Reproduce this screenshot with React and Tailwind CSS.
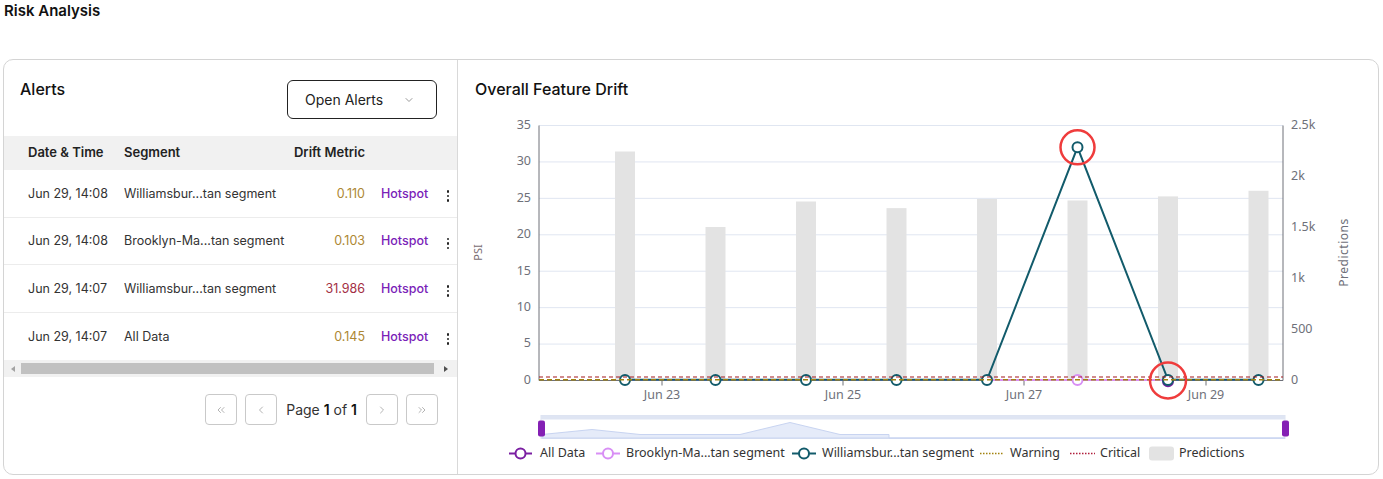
import React from 'react';
import { ChevronDown, ChevronLeft, ChevronRight, ChevronsLeft, ChevronsRight } from 'lucide-react';

const alerts = [
  { time: 'Jun 29, 14:08', segment: 'Williamsbur...tan segment', metric: '0.110', tone: 'text-[#ad8733]' },
  { time: 'Jun 29, 14:08', segment: 'Brooklyn-Ma...tan segment', metric: '0.103', tone: 'text-[#ad8733]' },
  { time: 'Jun 29, 14:07', segment: 'Williamsbur...tan segment', metric: '31.986', tone: 'text-[#a32f45]' },
  { time: 'Jun 29, 14:07', segment: 'All Data', metric: '0.145', tone: 'text-[#ad8733]' },
];

// chart geometry, page coordinates (svg viewBox is offset so these land in place)
const X0 = 539;
const X1 = 1283;
const Y0 = 379;
const psiY = (v) => Y0 - v * (255 / 35);
const predY = (p) => Y0 - p * (255 / 2500);
const xs = [625, 715.5, 806, 896.5, 987, 1077.5, 1168, 1258.5];
const predictions = [2245, 1505, 1755, 1690, 1780, 1765, 1805, 1860];
const williamsburg = [0.1, 0.1, 0.1, 0.1, 0.1, 32, 0.1, 0.1];

const Kebab = () => (
  <div className="flex flex-col items-center gap-[2px]">
    <span className="w-[2.5px] h-[2.5px] rounded-full bg-[#222]" />
    <span className="w-[2.5px] h-[2.5px] rounded-full bg-[#222]" />
    <span className="w-[2.5px] h-[2.5px] rounded-full bg-[#222]" />
  </div>
);

const PageButton = ({ children }) => (
  <button className="w-8 h-[31px] flex items-center justify-center rounded-[4px] border border-[#c9c9c9] bg-white text-[#b3b3b3]">
    {children}
  </button>
);

const Marker = ({ x, y, color }) => (
  <circle cx={x} cy={y} r="5" fill="#fff" stroke={color} strokeWidth="2" />
);

const DriftChart = () => {
  const grid = [0, 5, 10, 15, 20, 25, 30, 35];
  const right = [
    ['0', 0],
    ['500', 500],
    ['1k', 1000],
    ['1.5k', 1500],
    ['2k', 2000],
    ['2.5k', 2500],
  ];
  const ticks = [
    ['Jun 23', 662],
    ['Jun 25', 843],
    ['Jun 27', 1024],
    ['Jun 29', 1206],
  ];
  const teal = '#125b6b';
  const linePts = xs.map((x, i) => `${x},${psiY(williamsburg[i])}`).join(' ');

  return (
    <svg width="920" height="360" viewBox="458 106.5 920 360" style={{ fontFamily: '"Noto Sans", "DejaVu Sans", sans-serif' }}>
      {/* grid */}
      {grid.map((v) => (
        <line key={v} x1={X0} x2={X1} y1={psiY(v)} y2={psiY(v)} stroke="#e0e6f1" strokeWidth="1" />
      ))}

      {/* prediction bars */}
      {xs.map((x, i) => (
        <rect key={x} x={x - 10} y={predY(predictions[i])} width="20" height={Y0 - predY(predictions[i])} fill="#e3e3e3" />
      ))}

      {/* axes */}
      <line x1={X0} x2={X0} y1="124" y2={Y0} stroke="#6e7079" />
      <line x1={X1} x2={X1} y1="124" y2={Y0} stroke="#6e7079" />
      <line x1={X0} x2={X1} y1={Y0} y2={Y0} stroke="#6e7079" />
      {ticks.map(([t, x]) => (
        <line key={t} x1={x} x2={x} y1={Y0} y2={Y0 + 5} stroke="#6e7079" />
      ))}

      {grid.map((v) => (
        <text key={v} x="531" y={psiY(v)} textAnchor="end" dominantBaseline="middle" fontSize="12.5" fill="#6e7079">
          {v}
        </text>
      ))}
      {right.map(([label, v]) => (
        <text key={label} x="1291" y={predY(v)} dominantBaseline="middle" fontSize="12.5" fill="#6e7079">
          {label}
        </text>
      ))}
      {ticks.map(([t, x]) => (
        <text key={t} x={x} y="394" textAnchor="middle" dominantBaseline="middle" fontSize="12.5" fill="#6e7079">
          {t}
        </text>
      ))}
      <text x="479" y="251" transform="rotate(-90 479 251)" textAnchor="middle" dominantBaseline="middle" fontSize="11" fill="#7a6d73">
        PSI
      </text>
      <text x="1345" y="251" transform="rotate(-90 1345 251)" textAnchor="middle" dominantBaseline="middle" fontSize="12" fill="#6e7079" letterSpacing="0.5">
        Predictions
      </text>

      {/* series */}
      <line x1={xs[0]} x2={xs[7]} y1={Y0 - 0.5} y2={Y0 - 0.5} stroke="#7b1fa2" strokeWidth="2" />
      <line x1={xs[0]} x2={xs[7]} y1={Y0 - 0.5} y2={Y0 - 0.5} stroke="#d88ff5" strokeWidth="2" />
      <polyline points={linePts} fill="none" stroke={teal} strokeWidth="2" />
      <Marker x={xs[6]} y={Y0 + 0.8} color="#7b1fa2" />
      {xs.map((x, i) =>
        i === 5 ? null : <Marker key={x} x={x} y={Y0 - 0.5} color={teal} />
      )}
      <Marker x={xs[5]} y={Y0 - 0.5} color="#d88ff5" />
      <Marker x={xs[5]} y={psiY(32)} color={teal} />

      {/* thresholds */}
      <line x1={X0} x2={X1} y1="375.5" y2="375.5" stroke="#a3161c" strokeWidth="1.2" strokeDasharray="4 3" />
      <line x1={X0} x2={X1} y1="378.2" y2="378.2" stroke="#a2820f" strokeWidth="1.5" strokeDasharray="5 3" />

      {/* highlight rings */}
      <circle cx={xs[5]} cy={psiY(32)} r="17" fill="none" stroke="#ef3c3c" strokeWidth="2.5" />
      <circle cx={xs[6]} cy={Y0} r="18" fill="none" stroke="#ef3c3c" strokeWidth="2.5" />

      {/* data zoom */}
      <rect x="541" y="414" width="744" height="23" fill="#fff" stroke="#dde3f1" />
      <rect x="541" y="414" width="744" height="4" fill="#dfe5f3" />
      <polygon
        points="542,433 592,428 640,433 740,433 790,421 840,433 889,433 889,436.5 1285,436.5 542,436.5"
        fill="#e5ebf9"
        stroke="#c8d4f1"
        strokeWidth="1"
      />
      <rect x="538" y="419" width="7" height="16" rx="2" fill="#8420b4" />
      <rect x="1282" y="419" width="7" height="16" rx="2" fill="#8420b4" />

      {/* legend */}
      <g fontSize="12.5" fill="#333">
        <line x1="509" x2="532" y1="452" y2="452" stroke="#7b1fa2" strokeWidth="2" />
        <circle cx="520.5" cy="452" r="5" fill="#fff" stroke="#7b1fa2" strokeWidth="2" />
        <text x="540" y="452" dominantBaseline="middle">All Data</text>

        <line x1="596" x2="620" y1="452" y2="452" stroke="#d88ff5" strokeWidth="2" />
        <circle cx="608" cy="452" r="5" fill="#fff" stroke="#d88ff5" strokeWidth="2" />
        <text x="626" y="452" dominantBaseline="middle">Brooklyn-Ma...tan segment</text>

        <line x1="792" x2="816" y1="452" y2="452" stroke={teal} strokeWidth="2" />
        <circle cx="804" cy="452" r="5" fill="#fff" stroke={teal} strokeWidth="2" />
        <text x="822" y="452" dominantBaseline="middle">Williamsbur...tan segment</text>

        <line x1="980" x2="1004" y1="452" y2="452" stroke="#a2820f" strokeWidth="1.5" strokeDasharray="1.5 1.5" />
        <text x="1010" y="452" dominantBaseline="middle">Warning</text>

        <line x1="1070" x2="1095" y1="452" y2="452" stroke="#b01f3c" strokeWidth="1.5" strokeDasharray="1.5 1.5" />
        <text x="1100" y="452" dominantBaseline="middle">Critical</text>

        <rect x="1149" y="445" width="25" height="14" rx="3" fill="#e3e3e3" />
        <text x="1179" y="452" dominantBaseline="middle">Predictions</text>
      </g>
    </svg>
  );
};

export default function App() {
  return (
    <div className="w-[1383px] h-[479px] bg-white text-[#1a1a1a] overflow-hidden" style={{ fontFamily: 'Inter, "Liberation Sans", sans-serif' }}>
      <h1 className="pl-1 pt-px text-[15px] leading-5 font-semibold text-[#111]">Risk Analysis</h1>

      <div className="ml-[3px] mt-[38px] w-[1376px] h-[416px] flex rounded-[10px] border border-[#d4d4d4] overflow-hidden">
        {/* Alerts panel */}
        <div className="w-[454px] shrink-0 border-r border-[#d9d9d9] flex flex-col overflow-hidden">
          <div className="h-[76px] flex justify-between items-start pl-4 pr-5 pt-[17px]">
            <h2 className="text-[16px] leading-6 font-medium text-[#111]">Alerts</h2>
            <button className="mt-[3px] w-[150px] h-[39px] flex items-center justify-between pl-[17px] pr-[21px] rounded-[6px] border border-[#222] text-[14px] text-[#222]">
              <span>Open Alerts</span>
              <ChevronDown size={12} className="text-[#999]" />
            </button>
          </div>

          <div className="w-[453px] overflow-hidden">
            <div className="w-[480px]">
              <div className="h-[34px] flex items-center pl-6 bg-[#f1f1f1] text-[13px] font-semibold text-[#222]">
                <div className="w-[96px]">Date &amp; Time</div>
                <div className="w-[166px]">Segment</div>
                <div className="w-[75px] text-right">Drift Metric</div>
              </div>
              {alerts.map((a, i) => (
                <div
                  key={i}
                  className={`h-[47.5px] pt-[2px] flex items-center pl-6 text-[12.5px] text-[#333] ${i < alerts.length - 1 ? 'border-b border-[#ececec]' : ''}`}
                >
                  <div className="w-[96px]">{a.time}</div>
                  <div className="w-[166px] truncate">{a.segment}</div>
                  <div className={`w-[75px] text-right ${a.tone}`}>{a.metric}</div>
                  <div className="w-[60px] ml-4 font-medium text-[#7a22b8]">Hotspot</div>
                  <div className="w-[14px] flex justify-center pt-[3px]">
                    <Kebab />
                  </div>
                </div>
              ))}
            </div>
          </div>

          {/* horizontal scrollbar */}
          <div className="h-[17px] flex items-center bg-[#f1f1f1]">
            <div className="w-[17px] flex justify-center">
              <span className="w-0 h-0 border-y-[3.5px] border-y-transparent border-r-[4px] border-r-[#a3a3a3]" />
            </div>
            <div className="h-[11px] flex-1 bg-[#c1c1c1]" />
            <div className="w-[23px] flex justify-center">
              <span className="w-0 h-0 border-y-[3.5px] border-y-transparent border-l-[4px] border-l-[#505050]" />
            </div>
          </div>

          <div className="mt-[17px] pr-[19px] flex justify-end items-center gap-2">
            <PageButton>
              <ChevronsLeft size={12} strokeWidth={2} />
            </PageButton>
            <PageButton>
              <ChevronLeft size={12} strokeWidth={2} />
            </PageButton>
            <span className="text-[14px] text-[#333] px-px">
              Page <span className="font-semibold text-[#111]">1</span> of <span className="font-semibold text-[#111]">1</span>
            </span>
            <PageButton>
              <ChevronRight size={12} strokeWidth={2} />
            </PageButton>
            <PageButton>
              <ChevronsRight size={12} strokeWidth={2} />
            </PageButton>
          </div>
        </div>

        {/* Chart panel */}
        <div className="flex-1 flex flex-col">
          <div className="h-[48px] pl-[17px] pt-[17px]">
            <h2 className="text-[16px] leading-6 font-medium text-[#111]">Overall Feature Drift</h2>
          </div>
          <DriftChart />
        </div>
      </div>
    </div>
  );
}
